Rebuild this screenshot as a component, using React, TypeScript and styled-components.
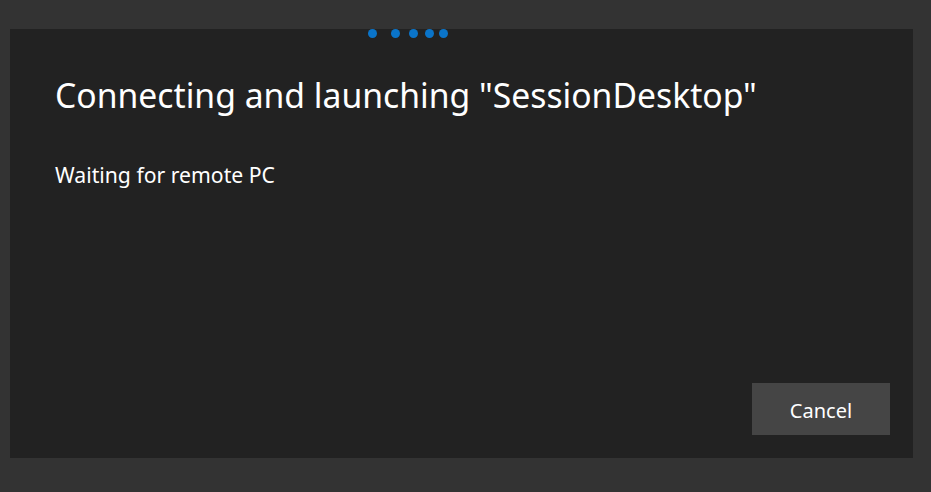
import React from "react";
import styled, { createGlobalStyle } from "styled-components";

const Global = createGlobalStyle`
  html, body { margin: 0; padding: 0; background: #333333; }
  body { font-family: "Noto Sans", "Open Sans", sans-serif; width: 931px; height: 492px; overflow: hidden; }
`;

const Page = styled.div`
  padding: 29px 18px 34px 10px;
  box-sizing: border-box;
  width: 931px;
  height: 492px;
`;

const Dialog = styled.div`
  position: relative;
  width: 903px;
  height: 429px;
  background: #222222;
  display: flex;
  flex-direction: column;
  box-sizing: border-box;
  padding: 0 23px 23px 45px;
`;

const Progress = styled.div`
  position: absolute;
  left: 0;
  top: 0;
  right: 0;
  height: 9px;
`;

const Dot = styled.span`
  position: absolute;
  top: 0;
  width: 9px;
  height: 9px;
  border-radius: 50%;
  background: #0a74c9;
`;

const Title = styled.h1`
  margin: 44px 0 0 0;
  font-weight: 400;
  font-size: 33.7px;
  line-height: 44px;
  color: #ffffff;
`;

const Subtitle = styled.p`
  margin: 44px 0 0 0;
  font-size: 21.2px;
  line-height: 28px;
  color: #ffffff;
`;

const Footer = styled.div`
  margin-top: auto;
  display: flex;
  justify-content: flex-end;
`;

const Button = styled.button`
  width: 138px;
  height: 52px;
  border: none;
  background: #454545;
  color: #ffffff;
  font-family: "Noto Sans", "Open Sans", sans-serif;
  font-size: 20px;
  padding: 2px 0 0 0;
`;

const dots = [357.5, 381, 399, 415, 429];

export default function App() {
  return (
    <>
      <Global />
      <Page>
        <Dialog>
          <Progress>
            {dots.map((x) => (
              <Dot key={x} style={{ left: x }} />
            ))}
          </Progress>
          <Title>Connecting and launching "SessionDesktop"</Title>
          <Subtitle>Waiting for remote PC</Subtitle>
          <Footer>
            <Button>Cancel</Button>
          </Footer>
        </Dialog>
      </Page>
    </>
  );
}
